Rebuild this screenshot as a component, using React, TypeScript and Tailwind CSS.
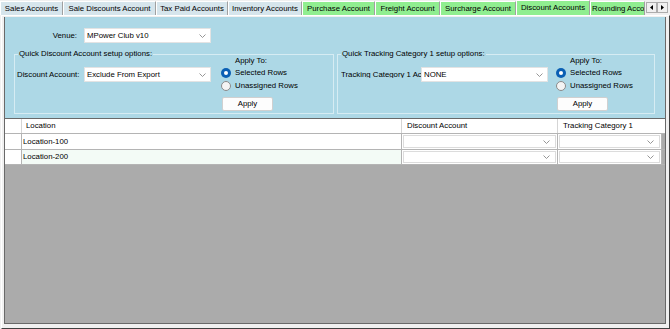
import React from 'react';

interface Tab {
  label: string;
  width: number;
  green?: boolean;
  selected?: boolean;
}

const tabs: Tab[] = [
  { label: 'Sales Accounts', width: 63 },
  { label: 'Sale Discounts Account', width: 93 },
  { label: 'Tax Paid Accounts', width: 72 },
  { label: 'Inventory Accounts', width: 74 },
  { label: 'Purchase Account', width: 73, green: true },
  { label: 'Freight Account', width: 65, green: true },
  { label: 'Surcharge  Account', width: 76, green: true },
  { label: 'Discount Accounts', width: 74, green: true, selected: true },
  { label: 'Rounding Accounts', width: 55, green: true },
];

const Chevron: React.FC = () => (
  <svg width="7" height="4" viewBox="0 0 7 4" className="shrink-0">
    <path d="M0.5 0.5 L3.5 3.5 L6.5 0.5" fill="none" stroke="#8a8a8a" strokeWidth="0.9" />
  </svg>
);

const ComboBox: React.FC<{ value: string; className?: string }> = ({ value, className = '' }) => (
  <div
    className={`h-[15px] bg-white border border-[#e3e3e3] flex items-center justify-between pl-[2px] pr-[4px] ${className}`}
  >
    <span className="whitespace-nowrap">{value}</span>
    <Chevron />
  </div>
);

const Radio: React.FC<{ checked?: boolean; label: string }> = ({ checked, label }) => (
  <div className="h-[13px] flex items-center gap-[4px]">
    {checked ? (
      <span className="w-[10px] h-[10px] rounded-full bg-[#0a5fb4] flex items-center justify-center">
        <span className="w-[4px] h-[4px] rounded-full bg-white" />
      </span>
    ) : (
      <span className="w-[10px] h-[10px] rounded-full bg-[#f4f4f4] border border-[#8a8a8a]" />
    )}
    <span>{label}</span>
  </div>
);

const ApplyColumn: React.FC<{ className?: string }> = ({ className = '' }) => (
  <div className={`flex flex-col ${className}`}>
    <div className="-mt-[3px] h-[10px] leading-[10px] pl-[14px]">Apply To:</div>
    <Radio checked label="Selected Rows" />
    <Radio label="Unassigned Rows" />
    <button className="mt-[5px] ml-px w-[51px] h-[14px] bg-[#fdfdfd] border border-[#d0d0d0] rounded-[2px] flex items-center justify-center text-black">
      Apply
    </button>
  </div>
);

const GridCombo: React.FC = () => (
  <div className="h-full p-px">
    <div className="h-full bg-white border border-[#dcdcdc] flex items-center justify-end pr-[5px]">
      <Chevron />
    </div>
  </div>
);

const App: React.FC = () => {
  const rows = ['Location-100', 'Location-200'];

  return (
    <div
      className="w-[670px] h-[329px] bg-[#f0f0f0] overflow-hidden flex flex-col text-[7.8px] leading-none text-black"
      style={{ fontFamily: '"Liberation Sans", Arial, sans-serif' }}
    >
      {/* tab strip */}
      <div className="h-[15px] flex items-end shrink-0">
        {tabs.map((t) => (
          <div
            key={t.label}
            style={{ width: t.width }}
            className={`overflow-hidden whitespace-nowrap flex items-center border-l border-t border-white border-r border-r-[#a0a0a0] ${
              t.selected ? 'h-[15px]' : 'h-[14px]'
            } ${t.green ? 'bg-[#90ee90]' : 'bg-[#d6e5ec]'} ${
              t.label.startsWith('Rounding') ? 'justify-start pl-[1px]' : 'justify-center'
            }`}
          >
            {t.label}
          </div>
        ))}
        <div className="flex ml-px self-center gap-0">
          <div className="w-[11px] h-[11px] border border-[#adadad] bg-[#f0f0f0] flex items-center justify-center">
            <svg width="3" height="5" viewBox="0 0 3 5">
              <path d="M3 0 L0 2.5 L3 5 Z" fill="#000" />
            </svg>
          </div>
          <div className="w-[11px] h-[11px] border border-[#adadad] bg-[#f0f0f0] flex items-center justify-center">
            <svg width="3" height="5" viewBox="0 0 3 5">
              <path d="M0 0 L3 2.5 L0 5 Z" fill="#000" />
            </svg>
          </div>
        </div>
      </div>

      {/* tab page */}
      <div className="ml-px w-[669px] flex-1 border-l border-t border-white border-r border-b border-r-[#404040] border-b-[#404040] pt-px pl-[2px] pr-[3px] pb-[4px] flex">
        <div className="flex-1 flex flex-col border-l border-r border-b border-[#696969]">
          {/* blue options panel */}
          <div className="h-[101px] shrink-0 bg-[#add8e6] flex flex-col">
            <div className="mt-[11px] h-[15px] flex items-center">
              <span className="w-[72px] text-right">Venue:</span>
              <ComboBox value="MPower Club v10" className="ml-[7px] w-[127px]" />
            </div>

            <div className="mt-[6px] ml-[9px] flex gap-[3px]">
              <fieldset className="w-[320px] border border-[#d6ecf3] pb-[2px] text-black">
                <legend className="ml-[3px] px-px leading-[10px] text-black">Quick Discount Account setup options:</legend>
                <div className="flex items-start">
                  <div className="mt-[8px] ml-[2px] flex items-center">
                    <span className="w-[67px] whitespace-nowrap">Discount Account:</span>
                    <ComboBox value="Exclude From Export" className="w-[127px]" />
                  </div>
                  <ApplyColumn className="ml-[10px]" />
                </div>
              </fieldset>

              <fieldset className="w-[318px] border border-[#d6ecf3] pb-[2px] text-black">
                <legend className="ml-[3px] px-px leading-[10px] text-black">Quick Tracking Category 1 setup options:</legend>
                <div className="flex items-start">
                  <div className="mt-[8px] ml-[3px] flex items-center">
                    <span className="w-[80px] overflow-hidden whitespace-nowrap">Tracking Category 1 Ac</span>
                    <ComboBox value="NONE" className="w-[127px]" />
                  </div>
                  <ApplyColumn className="ml-[8px]" />
                </div>
              </fieldset>
            </div>
          </div>

          {/* data grid */}
          <div className="flex-1 bg-[#ababab] border-t border-[#696969]">
            <div className="h-[15px] flex bg-white border-b border-[#b4b4b4]">
              <div className="w-[17px] border-r border-[#d5d5d5]" />
              <div className="w-[380px] border-r border-[#d5d5d5] flex items-center pl-[4px]">Location</div>
              <div className="w-[156px] border-r border-[#d5d5d5] flex items-center pl-[5px]">Discount Account</div>
              <div className="flex-1 flex items-center pl-[5px]">Tracking Category 1</div>
            </div>
            {rows.map((r, i) => (
              <div
                key={r}
                className={`${i === 0 ? 'h-[16px]' : 'h-[15px]'} flex border-b border-[#b4b4b4]`}
              >
                <div className="w-[17px] bg-white border-r border-[#b4b4b4]" />
                <div
                  className={`w-[380px] border-r border-[#b4b4b4] flex items-center pl-px ${
                    i === 1 ? 'bg-[#f3fbf6]' : 'bg-white'
                  }`}
                >
                  {r}
                </div>
                <div className="w-[156px] bg-white border-r border-[#b4b4b4]">
                  <GridCombo />
                </div>
                <div className="w-[104px] bg-white border-r border-[#b4b4b4]">
                  <GridCombo />
                </div>
              </div>
            ))}
          </div>
        </div>
      </div>
    </div>
  );
};

export default App;
